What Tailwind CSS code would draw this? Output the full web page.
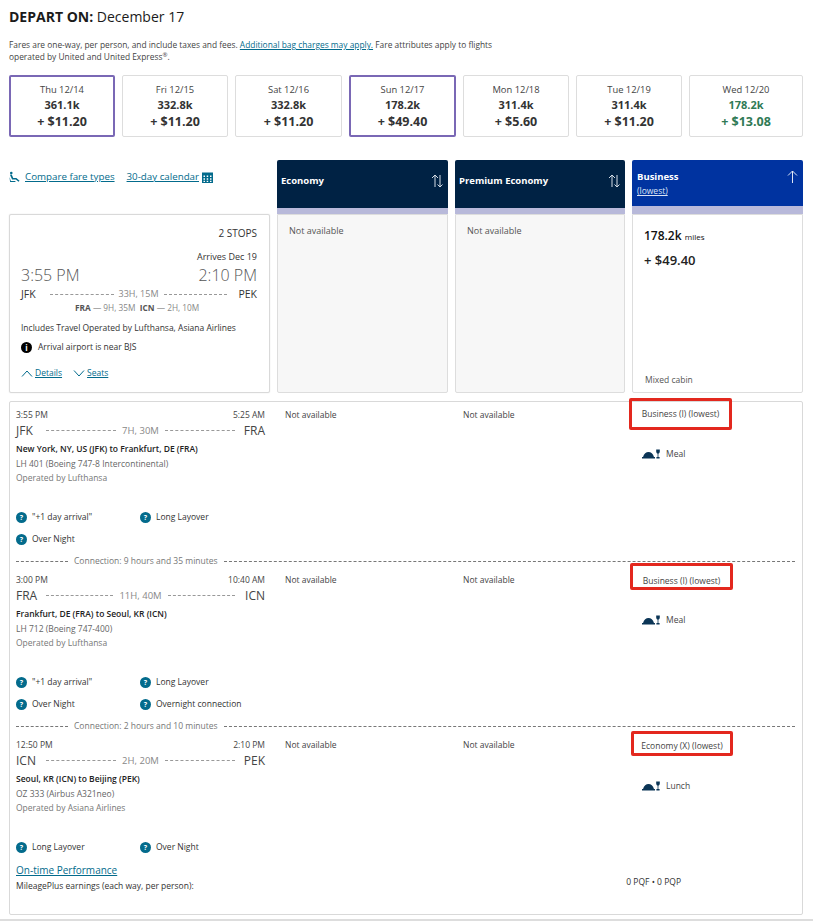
<!DOCTYPE html>
<html lang="en">
<head>
  <meta charset="UTF-8" />
  <title>Depart on December 17</title>
  <script src="https://cdn.jsdelivr.net/npm/@tailwindcss/browser@4"></script>
</head>
<body class="bg-white font-['Open_Sans',sans-serif] text-[#333]">
<div class="w-[813px] h-[921px] overflow-hidden pl-[9px] pr-[10px] pt-[8px] relative">
  <h1 class="text-[14px] leading-[18px] text-[#1b1b1b]"><b class="font-bold">DEPART ON:</b> December 17</h1>

  <p class="mt-[13px] w-[500px] text-[8.4px] leading-[12px] text-[#444]">Fares are one-way, per person, and include taxes and fees. <a class="underline text-[#036b8c]">Additional bag charges may apply.</a> Fare attributes apply to flights operated by United and United Express<sup class="text-[6px]">®</sup>.</p>

  <!-- date cards -->
  <div class="mt-[12px] grid grid-cols-[106px_106px_107px_107px_106px_106px_114px] gap-[7px] text-center">
    <div class="h-[62px] rounded-[2px] border-2 border-[#7a68b5] pt-[6px]"><div class="text-[9.4px] leading-[13px] text-[#444]">Thu 12/14</div><div class="mt-[1px] text-[11px] leading-[16px] font-bold">361.1k</div><div class="text-[12.5px] leading-[17px] font-bold">+ $11.20</div></div>
    <div class="h-[62px] rounded-[2px] border border-[#ddd] pt-[7px]"><div class="text-[9.4px] leading-[13px] text-[#444]">Fri 12/15</div><div class="mt-[1px] text-[11px] leading-[16px] font-bold">332.8k</div><div class="text-[12.5px] leading-[17px] font-bold">+ $11.20</div></div>
    <div class="h-[62px] rounded-[2px] border border-[#ddd] pt-[7px]"><div class="text-[9.4px] leading-[13px] text-[#444]">Sat 12/16</div><div class="mt-[1px] text-[11px] leading-[16px] font-bold">332.8k</div><div class="text-[12.5px] leading-[17px] font-bold">+ $11.20</div></div>
    <div class="h-[62px] rounded-[2px] border-2 border-[#7a68b5] pt-[6px]"><div class="text-[9.4px] leading-[13px] text-[#444]">Sun 12/17</div><div class="mt-[1px] text-[11px] leading-[16px] font-bold">178.2k</div><div class="text-[12.5px] leading-[17px] font-bold">+ $49.40</div></div>
    <div class="h-[62px] rounded-[2px] border border-[#ddd] pt-[7px]"><div class="text-[9.4px] leading-[13px] text-[#444]">Mon 12/18</div><div class="mt-[1px] text-[11px] leading-[16px] font-bold">311.4k</div><div class="text-[12.5px] leading-[17px] font-bold">+ $5.60</div></div>
    <div class="h-[62px] rounded-[2px] border border-[#ddd] pt-[7px]"><div class="text-[9.4px] leading-[13px] text-[#444]">Tue 12/19</div><div class="mt-[1px] text-[11px] leading-[16px] font-bold">311.4k</div><div class="text-[12.5px] leading-[17px] font-bold">+ $11.20</div></div>
    <div class="h-[62px] rounded-[2px] border border-[#ddd] pt-[7px]"><div class="text-[9.4px] leading-[13px] text-[#444]">Wed 12/20</div><div class="mt-[1px] text-[11px] leading-[16px] font-bold text-[#2f7a55]">178.2k</div><div class="text-[12.5px] leading-[17px] font-bold text-[#2f7a55]">+ $13.08</div></div>
  </div>

  <!-- fare table -->
  <div class="mt-[23px] grid grid-cols-[261px_171px_170px_171px] gap-x-[7px]">
    <div class="h-[54px] flex items-start gap-[5px] pt-[10px] text-[9.75px] leading-[14px] text-[#036b8c]">
      <svg class="w-[11px] h-[12px] mt-[1px]" viewBox="0 0 12 12" fill="#036b8c"><circle cx="2.5" cy="1.6" r="1.4"/><path d="M1 3.6 L3 3.4 L4.6 7 L8 7 L11.5 10 L10.4 11.2 L7.4 8.8 L3.4 8.8 Z"/><path d="M0.5 6 L2 10.4 L7 10.4 L7 11.4 L1.2 11.4 Z"/></svg>
      <a class="underline">Compare fare types</a>
      <a class="underline ml-[7px]">30-day calendar</a>
      <svg class="w-[11px] h-[12px] -ml-[2px] mt-[1px]" viewBox="0 0 11 12" fill="#036b8c"><path fill-rule="evenodd" d="M0 1.5 H11 V12 H0 Z M1.5 4.5 V6 H3 V4.5 Z M4.7 4.5 V6 H6.2 V4.5 Z M8 4.5 V6 H9.5 V4.5 Z M1.5 7.2 V8.7 H3 V7.2 Z M4.7 7.2 V8.7 H6.2 V7.2 Z M8 7.2 V8.7 H9.5 V7.2 Z M1.5 9.7 V11 H3 V9.7 Z M4.7 9.7 V11 H6.2 V9.7 Z M8 9.7 V11 H9.5 V9.7 Z"/></svg>
    </div>
    <div class="h-[54px] rounded-t-[2px] bg-[#002244] border-b-[6px] border-[#b8b9da] flex items-center justify-between px-[4px] pb-[6px] text-white">
      <span class="text-[9.5px] font-bold">Economy</span>
      <svg class="w-[13px] h-[14px]" viewBox="0 0 13 14" fill="none" stroke="#d5dde6" stroke-width="1"><path d="M4 13 V1 M1 4 L4 1 L7 4"/><path d="M9 1 V13 M6.5 10.5 L9 13 L11.5 10.5"/></svg>
    </div>
    <div class="h-[54px] rounded-t-[2px] bg-[#002244] border-b-[6px] border-[#b8b9da] flex items-center justify-between px-[4px] pb-[6px] text-white">
      <span class="text-[9.5px] font-bold">Premium Economy</span>
      <svg class="w-[13px] h-[14px]" viewBox="0 0 13 14" fill="none" stroke="#d5dde6" stroke-width="1"><path d="M4 13 V1 M1 4 L4 1 L7 4"/><path d="M9 1 V13 M6.5 10.5 L9 13 L11.5 10.5"/></svg>
    </div>
    <div class="h-[54px] rounded-t-[2px] bg-[#0033a0] border-b-[8px] border-[#b8b9da] flex justify-between px-[5px] pt-[10px] text-white">
      <div class="text-[9.5px] leading-[14px]"><div class="font-bold">Business</div><a class="underline text-[8.5px] leading-[13px] block text-[#dbe3f5]">(lowest)</a></div>
      <svg class="w-[11px] h-[14px]" viewBox="0 0 11 14" fill="none" stroke="#dfe6f5" stroke-width="1"><path d="M5.5 13 V1 M1 5.5 L5.5 1 L10 5.5"/></svg>
    </div>

    <!-- itinerary summary -->
    <div class="h-[179px] rounded-[2px] border border-[#d9d9d9] shadow-[0_0_1px_#ccc] pl-[11px] pr-[12px] pt-[11px]">
      <div class="text-right text-[10px] leading-[14px]">2 STOPS</div>
      <div class="mt-[10px] text-right text-[9px] leading-[13px]">Arrives Dec 19</div>
      <div class="flex justify-between text-[16px] leading-[20px] font-light text-[#555] mt-[2px]"><span>3:55 PM</span><span>2:10 PM</span></div>
      <div class="flex items-center mt-[1px] text-[10.5px] leading-[16px]">
        <span class="w-[29px]">JFK</span>
        <span class="flex-1 border-t border-dashed border-[#999]"></span>
        <span class="px-[5px] text-[9px] text-[#888]">33H, 15M</span>
        <span class="flex-1 border-t border-dashed border-[#999]"></span>
        <span class="w-[30px] text-right">PEK</span>
      </div>
      <div class="text-[8.3px] leading-[12px] text-[#888] pl-[54px]"><b class="text-[#555]">FRA</b> — 9H, 35M &nbsp;<b class="text-[#555]">ICN</b> — 2H, 10M</div>
      <div class="text-[8.5px] leading-[12px] mt-[8px]">Includes Travel Operated by Lufthansa, Asiana Airlines</div>
      <div class="flex items-center gap-[6px] mt-[7px] text-[8.5px] leading-[12px]">
        <span class="w-[11px] h-[11px] rounded-full bg-black text-white text-[8px] leading-[11px] font-bold text-center">i</span>
        Arrival airport is near BJS
      </div>
      <div class="flex items-center mt-[14px] text-[8.5px] leading-[12px] text-[#036b8c]">
        <svg class="w-[12px] h-[7px] mr-[2px]" viewBox="0 0 12 7" fill="none" stroke="#036b8c" stroke-width="1"><path d="M1 6.5 L6 1 L11 6.5"/></svg>
        <a class="underline">Details</a>
        <svg class="w-[12px] h-[7px] ml-[11px] mr-[2px]" viewBox="0 0 12 7" fill="none" stroke="#036b8c" stroke-width="1"><path d="M1 0.5 L6 6 L11 0.5"/></svg>
        <a class="underline">Seats</a>
      </div>
    </div>
    <div class="h-[179px] rounded-b-[2px] border border-[#ddd] bg-[#f7f7f7] pl-[11px] pt-[9px] text-[9px] leading-[13px] text-[#555]">Not available</div>
    <div class="h-[179px] rounded-b-[2px] border border-[#ddd] bg-[#f7f7f7] pl-[11px] pt-[9px] text-[9px] leading-[13px] text-[#555]">Not available</div>
    <div class="h-[179px] rounded-b-[2px] border border-[#ddd] pl-[11px] pt-[11px] flex flex-col">
      <div class="text-[12px] leading-[20px] font-semibold text-[#111]">178.2k <span class="text-[8px] font-normal">miles</span></div>
      <div class="text-[13px] leading-[18px] font-semibold text-[#222] mt-[4px]">+ $49.40</div>
      <div class="mt-auto mb-[6px] ml-[1px] text-[8.5px] leading-[12px] text-[#555]">Mixed cabin</div>
    </div>
  </div>

  <!-- flight details -->
  <div class="mt-[8px] h-[514px] rounded-[2px] border border-[#d9d9d9] text-[8.5px] leading-[14px]">

    <div class="grid grid-cols-[249px_178px_186px_auto] h-[153px] pl-[6px] pt-[6px]">
      <div>
        <div class="flex justify-between text-[#444]"><span>3:55 PM</span><span>5:25 AM</span></div>
        <div class="flex items-center text-[12px] leading-[17px]"><span class="w-[30px] text-[#444]">JFK</span><span class="flex-1 border-t border-dashed border-[#999]"></span><span class="px-[6px] text-[9.5px] text-[#888]">7H, 30M</span><span class="flex-1 border-t border-dashed border-[#999]"></span><span class="w-[30px] text-right text-[#444]">FRA</span></div>
        <div class="mt-[3px] mb-[1px] font-semibold text-[#222]">New York, NY, US (JFK) to Frankfurt, DE (FRA)</div>
        <div class="text-[#666]">LH 401 (Boeing 747-8 Intercontinental)</div>
        <div class="text-[#777]">Operated by Lufthansa</div>
        <div class="mt-[21px] flex items-center h-[22px]">
          <span class="w-[11px] h-[11px] rounded-full bg-[#036b8c] text-white text-[7px] leading-[11px] font-bold text-center mr-[5px]">?</span><span class="w-[108px]">"+1 day arrival"</span>
          <span class="w-[11px] h-[11px] rounded-full bg-[#036b8c] text-white text-[7px] leading-[11px] font-bold text-center mr-[5px]">?</span><span>Long Layover</span>
        </div>
        <div class="flex items-center h-[22px]"><span class="w-[11px] h-[11px] rounded-full bg-[#036b8c] text-white text-[7px] leading-[11px] font-bold text-center mr-[5px]">?</span><span>Over Night</span></div>
      </div>
      <div class="pl-[20px] text-[#444]">Not available</div>
      <div class="pl-[20px] text-[#444]">Not available</div>
      <div>
        <div class="-mt-[10px] w-[103px] h-[32px] rounded-[2px] border-[3px] border-[#e3281e] flex items-center justify-center text-[#444]">Business (I) (lowest)</div>
        <div class="flex items-center gap-[6px] pl-[13px] mt-[17px] text-[#444]">
          <svg class="w-[18px] h-[10px]" viewBox="0 0 18 10" fill="#0b3556"><path d="M1 8 C2 4.5 4 3 6.5 3 C9 3 11 4.5 12 8 Z"/><rect x="0" y="8" width="13" height="1.5"/><path d="M14.2 0.5 H17.8 V2.5 C17.8 3.8 17 4.5 16.4 4.6 V8 H17.6 V9.5 H14.4 V8 H15.6 V4.6 C15 4.5 14.2 3.8 14.2 2.5 Z"/></svg>
          Meal
        </div>
      </div>
    </div>

    <div class="flex items-center h-[12px] ml-[6px] mr-[7px] text-[#777]"><span class="w-[52px] border-t border-dashed border-[#777]"></span><span class="px-[6px]">Connection: 9 hours and 35 minutes</span><span class="flex-1 border-t border-dashed border-[#777]"></span></div>

    <div class="grid grid-cols-[249px_178px_186px_auto] h-[153px] pl-[6px]">
      <div class="pt-[6px]">
        <div class="flex justify-between text-[#444]"><span>3:00 PM</span><span>10:40 AM</span></div>
        <div class="flex items-center text-[12px] leading-[17px]"><span class="w-[30px] text-[#444]">FRA</span><span class="flex-1 border-t border-dashed border-[#999]"></span><span class="px-[6px] text-[9.5px] text-[#888]">11H, 40M</span><span class="flex-1 border-t border-dashed border-[#999]"></span><span class="w-[30px] text-right text-[#444]">ICN</span></div>
        <div class="mt-[3px] mb-[1px] font-semibold text-[#222]">Frankfurt, DE (FRA) to Seoul, KR (ICN)</div>
        <div class="text-[#666]">LH 712 (Boeing 747-400)</div>
        <div class="text-[#777]">Operated by Lufthansa</div>
        <div class="mt-[21px] flex items-center h-[22px]">
          <span class="w-[11px] h-[11px] rounded-full bg-[#036b8c] text-white text-[7px] leading-[11px] font-bold text-center mr-[5px]">?</span><span class="w-[108px]">"+1 day arrival"</span>
          <span class="w-[11px] h-[11px] rounded-full bg-[#036b8c] text-white text-[7px] leading-[11px] font-bold text-center mr-[5px]">?</span><span>Long Layover</span>
        </div>
        <div class="flex items-center h-[22px]"><span class="w-[11px] h-[11px] rounded-full bg-[#036b8c] text-white text-[7px] leading-[11px] font-bold text-center mr-[5px]">?</span><span class="w-[108px]">Over Night</span><span class="w-[11px] h-[11px] rounded-full bg-[#036b8c] text-white text-[7px] leading-[11px] font-bold text-center mr-[5px]">?</span><span>Overnight connection</span></div>
      </div>
      <div class="pl-[20px] pt-[6px] text-[#444]">Not available</div>
      <div class="pl-[20px] pt-[6px] text-[#444]">Not available</div>
      <div>
        <div class="-mt-[4px] ml-[1px] w-[103px] h-[27px] rounded-[2px] border-[3px] border-[#e3281e] flex justify-center pt-[8px] text-[#444]">Business (I) (lowest)</div>
        <div class="flex items-center gap-[6px] pl-[13px] mt-[23px] text-[#444]">
          <svg class="w-[18px] h-[10px]" viewBox="0 0 18 10" fill="#0b3556"><path d="M1 8 C2 4.5 4 3 6.5 3 C9 3 11 4.5 12 8 Z"/><rect x="0" y="8" width="13" height="1.5"/><path d="M14.2 0.5 H17.8 V2.5 C17.8 3.8 17 4.5 16.4 4.6 V8 H17.6 V9.5 H14.4 V8 H15.6 V4.6 C15 4.5 14.2 3.8 14.2 2.5 Z"/></svg>
          Meal
        </div>
      </div>
    </div>

    <div class="flex items-center h-[12px] ml-[6px] mr-[7px] text-[#777]"><span class="w-[52px] border-t border-dashed border-[#777]"></span><span class="px-[6px]">Connection: 2 hours and 10 minutes</span><span class="flex-1 border-t border-dashed border-[#777]"></span></div>

    <div class="grid grid-cols-[249px_178px_186px_auto] pl-[6px]">
      <div class="pt-[6px]">
        <div class="flex justify-between text-[#444]"><span>12:50 PM</span><span>2:10 PM</span></div>
        <div class="flex items-center text-[12px] leading-[17px]"><span class="w-[30px] text-[#444]">ICN</span><span class="flex-1 border-t border-dashed border-[#999]"></span><span class="px-[6px] text-[9.5px] text-[#888]">2H, 20M</span><span class="flex-1 border-t border-dashed border-[#999]"></span><span class="w-[30px] text-right text-[#444]">PEK</span></div>
        <div class="mt-[3px] mb-[1px] font-semibold text-[#222]">Seoul, KR (ICN) to Beijing (PEK)</div>
        <div class="text-[#666]">OZ 333 (Airbus A321neo)</div>
        <div class="text-[#777]">Operated by Asiana Airlines</div>
        <div class="mt-[21px] flex items-center h-[22px]">
          <span class="w-[11px] h-[11px] rounded-full bg-[#036b8c] text-white text-[7px] leading-[11px] font-bold text-center mr-[5px]">?</span><span class="w-[108px]">Long Layover</span>
          <span class="w-[11px] h-[11px] rounded-full bg-[#036b8c] text-white text-[7px] leading-[11px] font-bold text-center mr-[5px]">?</span><span>Over Night</span>
        </div>
      </div>
      <div class="pl-[20px] pt-[6px] text-[#444]">Not available</div>
      <div class="pl-[20px] pt-[6px] text-[#444]">Not available</div>
      <div>
        <div class="-mt-[1px] ml-[2px] w-[102px] h-[25px] rounded-[2px] border-[3px] border-[#e3281e] flex justify-center pt-[5px] text-[#444]">Economy (X) (lowest)</div>
        <div class="flex items-center gap-[6px] pl-[13px] mt-[23px] text-[#444]">
          <svg class="w-[18px] h-[10px]" viewBox="0 0 18 10" fill="#0b3556"><path d="M1 8 C2 4.5 4 3 6.5 3 C9 3 11 4.5 12 8 Z"/><rect x="0" y="8" width="13" height="1.5"/><path d="M14.2 0.5 H17.8 V2.5 C17.8 3.8 17 4.5 16.4 4.6 V8 H17.6 V9.5 H14.4 V8 H15.6 V4.6 C15 4.5 14.2 3.8 14.2 2.5 Z"/></svg>
          Lunch
        </div>
      </div>
    </div>

    <div class="pl-[6px] mt-[4px]"><a class="underline text-[#036b8c] text-[10px] leading-[16px]">On-time Performance</a></div>
    <div class="flex justify-between mt-[1px] pl-[6px] pr-[121px] text-[#333]"><span>MileagePlus earnings (each way, per person):</span><span class="-mt-[4px]">0 PQF • 0 PQP</span></div>
  </div>
  <div class="absolute bottom-0 left-0 w-full h-[2px] bg-[#ddd]"></div>
</div>
</body>
</html>
